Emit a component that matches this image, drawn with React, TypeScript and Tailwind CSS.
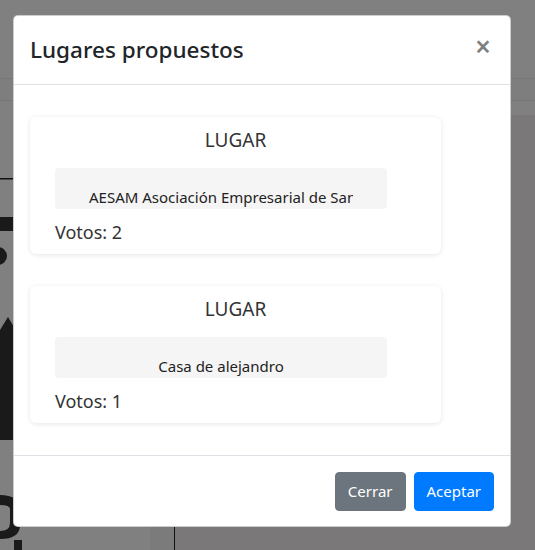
import React from "react";

const lugares = [
  { nombre: "AESAM Asociación Empresarial de San Martín", votos: 2 },
  { nombre: "Casa de alejandro", votos: 1 },
];

function LugarCard({ nombre, votos }: { nombre: string; votos: number }) {
  return (
    <div className="w-[411px] rounded-md bg-white pt-2 pb-[7px] shadow-[0_1px_5px_rgba(0,0,0,0.1)]">
      <div className="text-center text-[19px] leading-[30px] text-[#333]">LUGAR</div>
      <div className="ml-[25px] mt-[13px] flex h-[41px] w-[332px] items-end rounded bg-[#f5f5f5] px-[34px]">
        <div className="w-full overflow-hidden whitespace-nowrap text-center text-[15px] leading-[23px] text-[#222]">
          {nombre}
        </div>
      </div>
      <div className="mt-[8px] px-[25px] text-[18px] leading-[30px] text-[#333]">Votos: {votos}</div>
    </div>
  );
}

export default function App() {
  return (
    <div className="relative h-[550px] w-[535px] overflow-hidden bg-[#7a7878] font-['Noto_Sans',sans-serif]">
      {/* Page behind the backdrop */}
      <div className="h-[78px] bg-[#808080]" />
      <div className="h-[22px] border-t border-[#777] bg-[#7e7e7e]" />
      <div className="h-[15px] border-t border-[#767676] bg-[#808080]" />
      <div className="flex h-[435px]">
        <div className="w-[150px] bg-[#808080]">
          <svg width="150" height="435" viewBox="0 0 150 435">
            <rect x="0" y="63" width="150" height="1.5" fill="#111" />
            <rect x="0" y="102" width="20" height="14" fill="#1a1a1a" />
            <circle cx="-2" cy="141" r="9" fill="#1a1a1a" />
            <path d="M0 215 L8 202 L20 222 L20 325 L0 325 Z" fill="#1a1a1a" />
            <path d="M0 380 Q20 380 20 396 L20 410 Q20 424 0 424 L0 416 Q10 416 10 408 L10 394 Q10 390 0 390 Z" fill="#1a1a1a" />
            <rect x="14" y="425" width="8" height="10" fill="#1a1a1a" />
          </svg>
        </div>
        <div className="w-[24px] bg-[#7c7b7b]" />
        <div className="flex-1 border-l border-[#111] bg-[#7a7878]" />
      </div>

      {/* Modal */}
      <div className="absolute left-[13px] top-[15px] w-[498px] rounded-[5px] border border-black/20 bg-white">
        <div className="flex items-start justify-between border-b border-[#dee2e6] p-4">
          <h4 className="text-[22.5px] font-medium leading-[36px] text-[#212529]">Lugares propuestos</h4>
          <button className="mr-[3px] mt-[-4px] text-[28px] font-semibold leading-[36px] text-black/50">×</button>
        </div>
        <div className="p-4">
          <div className="flex flex-col gap-[32px] pt-4 pb-4">
            {lugares.map((l) => (
              <LugarCard key={l.nombre} nombre={l.nombre} votos={l.votos} />
            ))}
          </div>
        </div>
        <div className="flex justify-end gap-2 border-t border-[#dee2e6] p-4 pb-[15px]">
          <button className="rounded border border-[#6c757d] bg-[#6c757d] px-3 py-[6px] text-[15px] leading-[25px] text-white">
            Cerrar
          </button>
          <button className="rounded border border-[#007bff] bg-[#007bff] px-3 py-[6px] text-[15px] leading-[25px] text-white">
            Aceptar
          </button>
        </div>
      </div>
    </div>
  );
}
